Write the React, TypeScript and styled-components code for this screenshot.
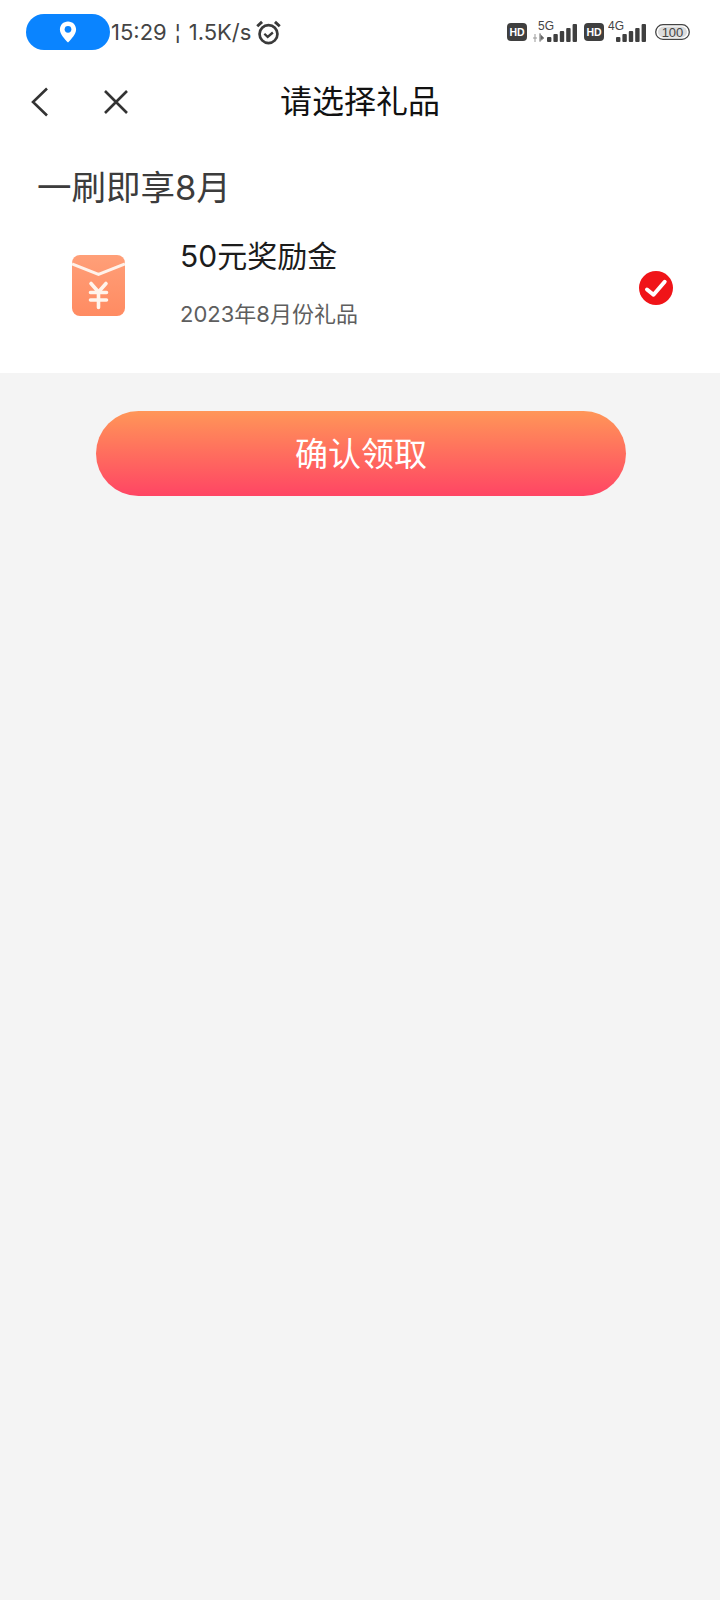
import React from "react";
import styled, { createGlobalStyle } from "styled-components";

const GlobalStyle = createGlobalStyle`
  html, body {
    margin: 0;
    padding: 0;
    background: #f4f4f4;
    font-family: "Inter", "Noto Sans CJK SC", sans-serif;
  }
`;

const Page = styled.div`
  width: 720px;
  height: 1600px;
  background: #f4f4f4;
  overflow: hidden;
`;

const Top = styled.div`
  background: #fff;
  height: 373px;
`;

const StatusBar = styled.div`
  height: 64px;
  padding: 14px 30px 0 26px;
  box-sizing: border-box;
  display: flex;
  align-items: flex-start;
`;

const LocationPill = styled.div`
  width: 84px;
  height: 36px;
  border-radius: 18px;
  background: #0a84ff;
  display: flex;
  align-items: center;
  justify-content: center;
`;

const StatusText = styled.div`
  margin-left: 1px;
  height: 36px;
  line-height: 37px;
  font-size: 22px;
  color: #444;
  white-space: nowrap;
  display: flex;
  gap: 8px;
`;

const AlarmWrap = styled.div`
  margin-left: 5px;
  height: 36px;
  display: flex;
  align-items: center;
`;

const StatusRight = styled.div`
  margin-left: auto;
  height: 36px;
  display: flex;
  align-items: center;
`;

const SignalSlot = styled.div<{ $left: number; $right: number }>`
  display: flex;
  margin: 0 ${(p) => p.$right}px 0 ${(p) => p.$left}px;
`;

const NavBar = styled.div`
  height: 76px;
  padding: 0 30px;
  position: relative;
  display: flex;
  align-items: center;
  gap: 53px;
`;

const NavTitle = styled.div`
  position: absolute;
  left: 0;
  right: 0;
  padding-bottom: 6px;
  text-align: center;
  font-size: 32px;
  color: #111;
`;

const Headline = styled.div`
  padding: 24px 0 0 37px;
  height: 50px;
  line-height: 48px;
  font-size: 34.5px;
  color: #3c3c3c;
`;

const GiftRow = styled.div`
  padding: 0 47px 0 72px;
  margin-top: 22px;
  display: flex;
  align-items: center;
`;

const GiftIcon = styled.div<{ $shift: number }>`
  display: flex;
  margin-top: ${(p) => p.$shift}px;
`;

const GiftText = styled.div`
  margin-left: 55px;
  flex: 1;
`;

const GiftName = styled.div`
  font-size: 30px;
  line-height: 40px;
  color: #1c1c1c;
`;

const GiftNote = styled.div`
  margin-top: 23px;
  font-size: 22px;
  line-height: 30px;
  color: #5e5e5e;
`;

const Confirm = styled.button`
  display: block;
  width: 530px;
  height: 85px;
  margin: 38px 0 0 96px;
  padding: 0 0 4px;
  border: 0;
  border-radius: 43px;
  background: linear-gradient(180deg, #ff9658 0%, #ff4564 100%);
  color: #fff;
  font-family: inherit;
  font-size: 33px;
`;

const PinIcon = () => (
  <svg width="18" height="22" viewBox="0 0 20 25">
    <path
      d="M10 0.5C4.6 0.5 0.8 4.6 0.8 9.6c0 5.6 5.4 10.6 9.2 14.9 3.8-4.3 9.2-9.3 9.2-14.9C19.2 4.6 15.4 0.5 10 0.5z"
      fill="#fff"
    />
    <circle cx="10" cy="9.5" r="3.8" fill="#0a84ff" />
  </svg>
);

const AlarmIcon = () => (
  <svg width="25" height="25" viewBox="0 0 24 24" fill="none" stroke="#3a3a3a">
    <circle cx="12" cy="13.5" r="8.6" strokeWidth="2.6" />
    <path d="M8 13.2l3.2 3 5-4.2" strokeWidth="2.2" />
    <path d="M1.2 6L5.8 1.8M22.8 6L18.2 1.8" strokeWidth="2.8" />
  </svg>
);

const SIGNAL_HEIGHTS = [5, 8, 11, 14, 18];

const SignalIcon = ({ label, barsAt, arrows }: { label: string; barsAt: number; arrows?: boolean }) => (
  <svg width={barsAt + 30} height="30" viewBox={`0 0 ${barsAt + 30} 30`}>
    <text
      x={arrows ? 6 : 0}
      y="13"
      fontFamily="Liberation Sans, sans-serif"
      fontSize="12"
      fill="#444"
    >
      {label}
    </text>
    {arrows && (
      <path d="M1 21h4M3 17v8M8 16v9M8 17l4 4-4 3z" stroke="#999" strokeWidth="1" fill="#666" />
    )}
    {SIGNAL_HEIGHTS.map((h, i) => (
      <rect
        key={i}
        x={barsAt + i * 6.4}
        y={25 - h}
        width="4.4"
        height={h}
        rx="1"
        fill="#3f3f3f"
      />
    ))}
  </svg>
);

const HdIcon = () => (
  <svg width="20" height="18" viewBox="0 0 20 18">
    <rect width="20" height="18" rx="4" fill="#3f3f3f" />
    <text
      x="10"
      y="13"
      textAnchor="middle"
      fontFamily="Liberation Sans, sans-serif"
      fontWeight="700"
      fontSize="10.5"
      fill="#fff"
    >
      HD
    </text>
  </svg>
);

const BatteryIcon = () => (
  <svg width="35" height="16" viewBox="0 0 35 16">
    <rect x="0.7" y="0.7" width="33.6" height="14.6" rx="7.3" fill="#fff" stroke="#444" strokeWidth="1.3" />
    <rect x="3" y="2.6" width="29" height="10.8" rx="5.4" fill="#dcdcdc" />
    <text
      x="17.5"
      y="13"
      textAnchor="middle"
      fontFamily="Liberation Sans, sans-serif"
      fontSize="13"
      fill="#444"
    >
      100
    </text>
  </svg>
);

const EnvelopeIcon = () => (
  <svg width="53" height="61" viewBox="0 0 53 61">
    <defs>
      <linearGradient id="env" x1="0" y1="0" x2="0" y2="1">
        <stop offset="0" stopColor="#ff9f78" />
        <stop offset="1" stopColor="#ff8b62" />
      </linearGradient>
    </defs>
    <rect width="53" height="61" rx="8" fill="url(#env)" />
    <path d="M0 9L26.5 19.5L53 9" fill="none" stroke="#fff2ea" strokeWidth="3" />
    <path
      d="M19 28.5L26.5 37l7.5-8.5M18.5 37.5h16M18.5 45h16M26.5 37v15.5"
      fill="none"
      stroke="#fff4ec"
      strokeWidth="3.6"
      strokeLinecap="round"
    />
  </svg>
);

const CheckIcon = () => (
  <svg width="34" height="34" viewBox="0 0 34 34">
    <circle cx="17" cy="17" r="17" fill="#f01418" />
    <path
      d="M8 18.5l6.5 5.2L25.7 10.8"
      fill="none"
      stroke="#fff"
      strokeWidth="4"
      strokeLinecap="round"
      strokeLinejoin="round"
    />
  </svg>
);

const BackIcon = () => (
  <svg width="20" height="30" viewBox="0 0 20 30" fill="none" stroke="#333" strokeWidth="2.6">
    <path d="M17 1.5L3 15l14 13.5" />
  </svg>
);

const CloseIcon = () => (
  <svg width="26" height="26" viewBox="0 0 26 26" fill="none" stroke="#333" strokeWidth="2.6">
    <path d="M2 2l22 22M24 2L2 24" />
  </svg>
);

export default function App() {
  return (
    <Page>
      <GlobalStyle />
      <Top>
        <StatusBar>
          <LocationPill>
            <PinIcon />
          </LocationPill>
          <StatusText>
            <span>15:29</span>
            <span>¦</span>
            <span>1.5K/s</span>
          </StatusText>
          <AlarmWrap>
            <AlarmIcon />
          </AlarmWrap>
          <StatusRight>
            <HdIcon />
            <SignalSlot $left={5} $right={7}>
              <SignalIcon label="5G" barsAt={15} arrows />
            </SignalSlot>
            <HdIcon />
            <SignalSlot $left={4} $right={9}>
              <SignalIcon label="4G" barsAt={8} />
            </SignalSlot>
            <BatteryIcon />
          </StatusRight>
        </StatusBar>
        <NavBar>
          <BackIcon />
          <CloseIcon />
          <NavTitle>请选择礼品</NavTitle>
        </NavBar>
        <Headline>一刷即享8月</Headline>
        <GiftRow>
          <GiftIcon $shift={6}>
            <EnvelopeIcon />
          </GiftIcon>
          <GiftText>
            <GiftName>50元奖励金</GiftName>
            <GiftNote>2023年8月份礼品</GiftNote>
          </GiftText>
          <GiftIcon $shift={10}>
            <CheckIcon />
          </GiftIcon>
        </GiftRow>
      </Top>
      <Confirm>确认领取</Confirm>
    </Page>
  );
}
